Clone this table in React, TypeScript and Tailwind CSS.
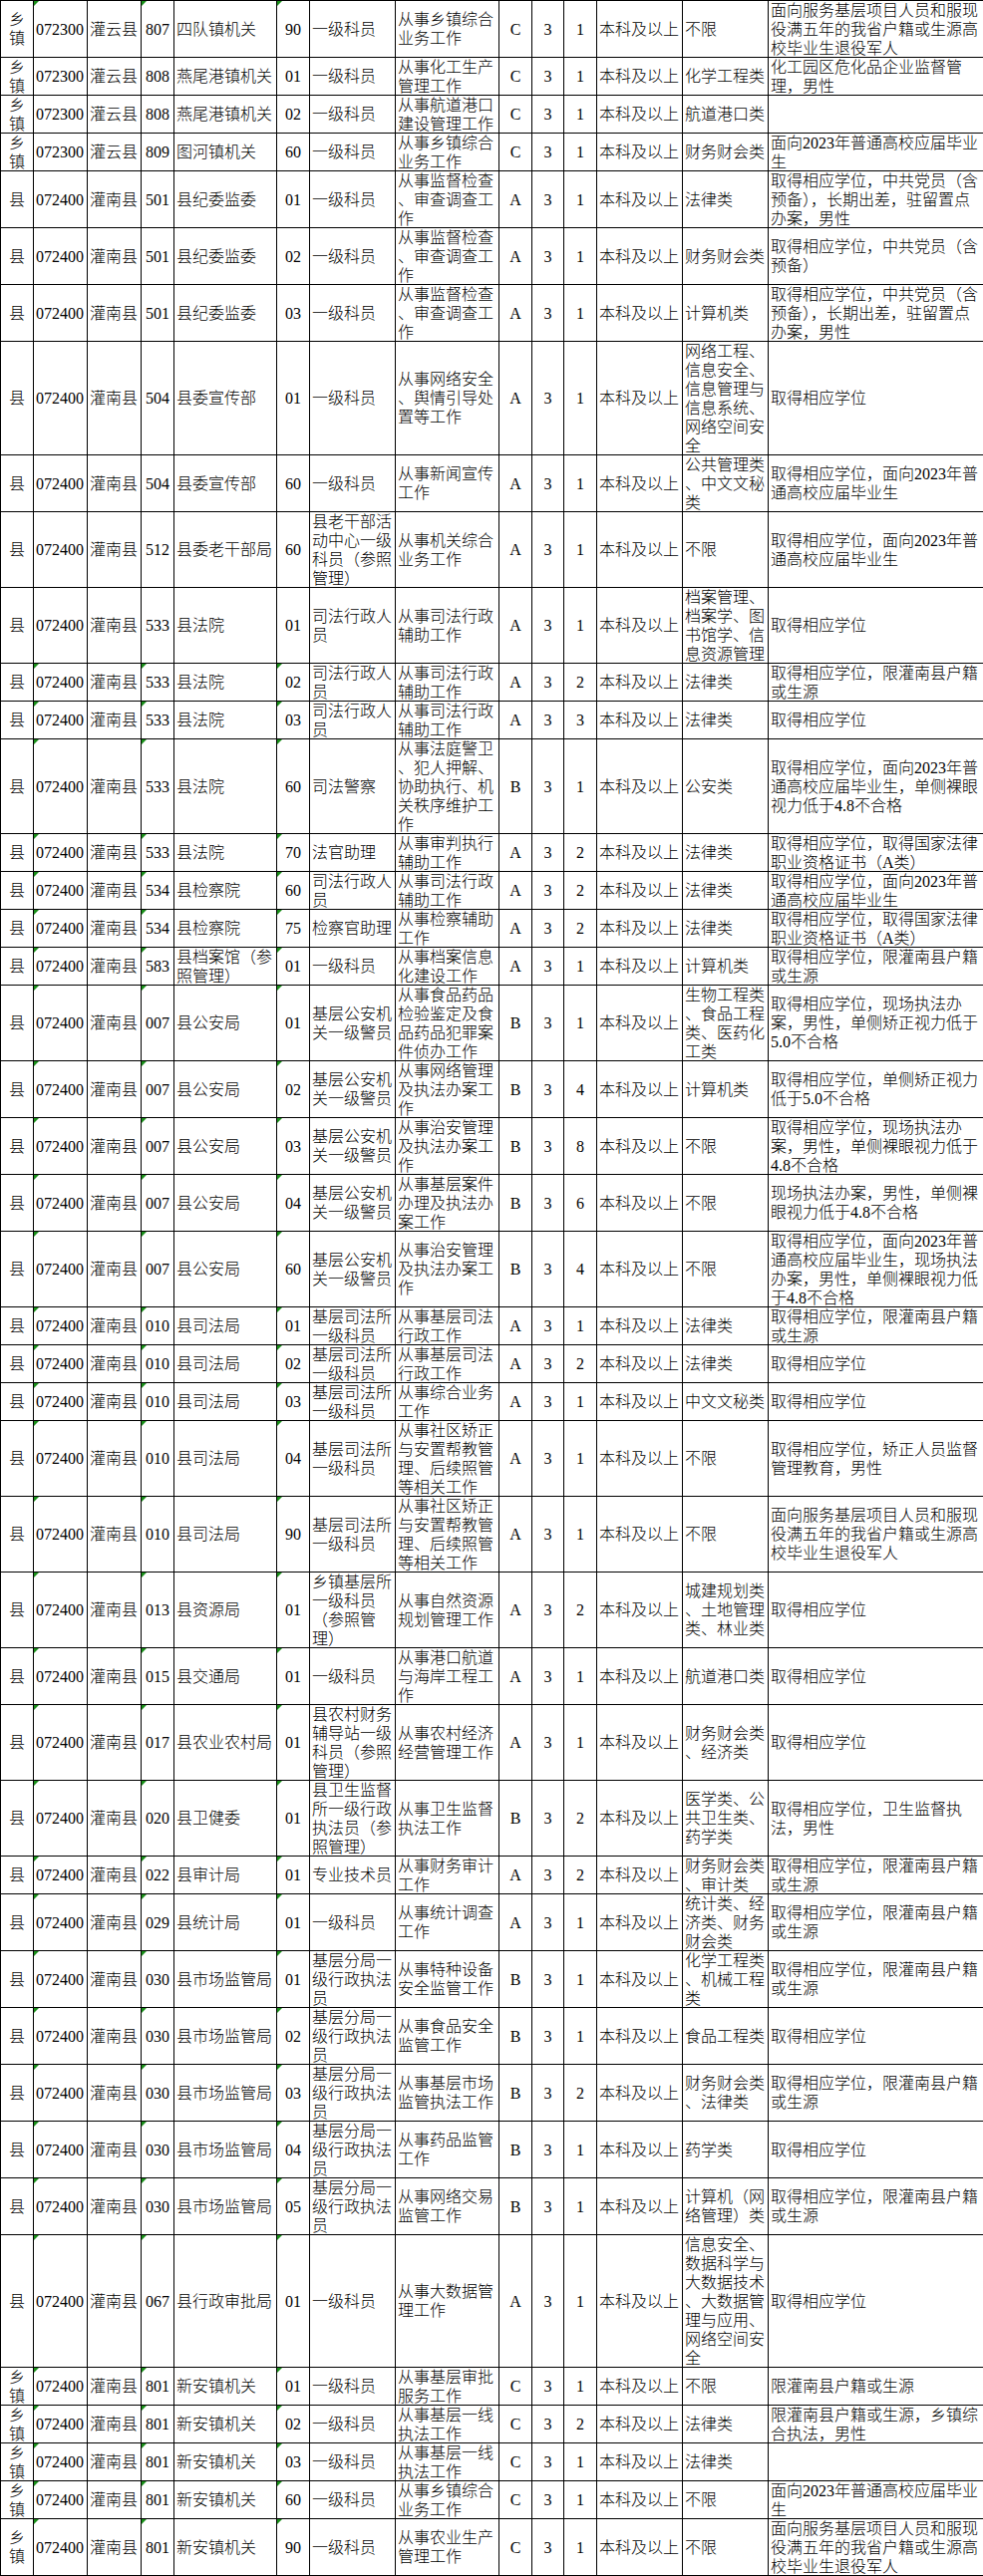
import React from "react";

const rows: string[] = [
  "3|1|乡/镇|072300|灌云县|807|四队镇机关|90|一级科员|从事乡镇综合/业务工作|C|3|1|本科及以上|不限|面向服务基层项目人员和服现/役满五年的我省户籍或生源高/校毕业生退役军人",
  "2|0|乡/镇|072300|灌云县|808|燕尾港镇机关|01|一级科员|从事化工生产/管理工作|C|3|1|本科及以上|化学工程类|化工园区危化品企业监督管/理，男性",
  "2|0|乡/镇|072300|灌云县|808|燕尾港镇机关|02|一级科员|从事航道港口/建设管理工作|C|3|1|本科及以上|航道港口类|",
  "2|0|乡/镇|072300|灌云县|809|图河镇机关|60|一级科员|从事乡镇综合/业务工作|C|3|1|本科及以上|财务财会类|面向2023年普通高校应届毕业/生",
  "3|0|县|072400|灌南县|501|县纪委监委|01|一级科员|从事监督检查/、审查调查工/作|A|3|1|本科及以上|法律类|取得相应学位，中共党员（含/预备），长期出差，驻留置点/办案，男性",
  "3|0|县|072400|灌南县|501|县纪委监委|02|一级科员|从事监督检查/、审查调查工/作|A|3|1|本科及以上|财务财会类|取得相应学位，中共党员（含/预备）",
  "3|0|县|072400|灌南县|501|县纪委监委|03|一级科员|从事监督检查/、审查调查工/作|A|3|1|本科及以上|计算机类|取得相应学位，中共党员（含/预备），长期出差，驻留置点/办案，男性",
  "6|0|县|072400|灌南县|504|县委宣传部|01|一级科员|从事网络安全/、舆情引导处/置等工作|A|3|1|本科及以上|网络工程、/信息安全、/信息管理与/信息系统、/网络空间安/全|取得相应学位",
  "3|0|县|072400|灌南县|504|县委宣传部|60|一级科员|从事新闻宣传/工作|A|3|1|本科及以上|公共管理类/、中文文秘/类|取得相应学位，面向2023年普/通高校应届毕业生",
  "4|0|县|072400|灌南县|512|县委老干部局|60|县老干部活/动中心一级/科员（参照/管理）|从事机关综合/业务工作|A|3|1|本科及以上|不限|取得相应学位，面向2023年普/通高校应届毕业生",
  "4|0|县|072400|灌南县|533|县法院|01|司法行政人/员|从事司法行政/辅助工作|A|3|1|本科及以上|档案管理、/档案学、图/书馆学、信/息资源管理|取得相应学位",
  "2|1|县|072400|灌南县|533|县法院|02|司法行政人/员|从事司法行政/辅助工作|A|3|2|本科及以上|法律类|取得相应学位，限灌南县户籍/或生源",
  "2|1|县|072400|灌南县|533|县法院|03|司法行政人/员|从事司法行政/辅助工作|A|3|3|本科及以上|法律类|取得相应学位",
  "5|1|县|072400|灌南县|533|县法院|60|司法警察|从事法庭警卫/、犯人押解、/协助执行、机/关秩序维护工/作|B|3|1|本科及以上|公安类|取得相应学位，面向2023年普/通高校应届毕业生，单侧裸眼/视力低于4.8不合格",
  "2|1|县|072400|灌南县|533|县法院|70|法官助理|从事审判执行/辅助工作|A|3|2|本科及以上|法律类|取得相应学位，取得国家法律/职业资格证书（A类）",
  "2|1|县|072400|灌南县|534|县检察院|60|司法行政人/员|从事司法行政/辅助工作|A|3|2|本科及以上|法律类|取得相应学位，面向2023年普/通高校应届毕业生",
  "2|1|县|072400|灌南县|534|县检察院|75|检察官助理|从事检察辅助/工作|A|3|2|本科及以上|法律类|取得相应学位，取得国家法律/职业资格证书（A类）",
  "2|1|县|072400|灌南县|583|县档案馆（参/照管理）|01|一级科员|从事档案信息/化建设工作|A|3|1|本科及以上|计算机类|取得相应学位，限灌南县户籍/或生源",
  "4|1|县|072400|灌南县|007|县公安局|01|基层公安机/关一级警员|从事食品药品/检验鉴定及食/品药品犯罪案/件侦办工作|B|3|1|本科及以上|生物工程类/、食品工程/类、医药化/工类|取得相应学位，现场执法办/案，男性，单侧矫正视力低于/5.0不合格",
  "3|1|县|072400|灌南县|007|县公安局|02|基层公安机/关一级警员|从事网络管理/及执法办案工/作|B|3|4|本科及以上|计算机类|取得相应学位，单侧矫正视力/低于5.0不合格",
  "3|1|县|072400|灌南县|007|县公安局|03|基层公安机/关一级警员|从事治安管理/及执法办案工/作|B|3|8|本科及以上|不限|取得相应学位，现场执法办/案，男性，单侧裸眼视力低于/4.8不合格",
  "3|1|县|072400|灌南县|007|县公安局|04|基层公安机/关一级警员|从事基层案件/办理及执法办/案工作|B|3|6|本科及以上|不限|现场执法办案，男性，单侧裸/眼视力低于4.8不合格",
  "4|1|县|072400|灌南县|007|县公安局|60|基层公安机/关一级警员|从事治安管理/及执法办案工/作|B|3|4|本科及以上|不限|取得相应学位，面向2023年普/通高校应届毕业生，现场执法/办案，男性，单侧裸眼视力低/于4.8不合格",
  "2|1|县|072400|灌南县|010|县司法局|01|基层司法所/一级科员|从事基层司法/行政工作|A|3|1|本科及以上|法律类|取得相应学位，限灌南县户籍/或生源",
  "2|1|县|072400|灌南县|010|县司法局|02|基层司法所/一级科员|从事基层司法/行政工作|A|3|2|本科及以上|法律类|取得相应学位",
  "2|1|县|072400|灌南县|010|县司法局|03|基层司法所/一级科员|从事综合业务/工作|A|3|1|本科及以上|中文文秘类|取得相应学位",
  "4|1|县|072400|灌南县|010|县司法局|04|基层司法所/一级科员|从事社区矫正/与安置帮教管/理、后续照管/等相关工作|A|3|1|本科及以上|不限|取得相应学位，矫正人员监督/管理教育，男性",
  "4|1|县|072400|灌南县|010|县司法局|90|基层司法所/一级科员|从事社区矫正/与安置帮教管/理、后续照管/等相关工作|A|3|1|本科及以上|不限|面向服务基层项目人员和服现/役满五年的我省户籍或生源高/校毕业生退役军人",
  "4|1|县|072400|灌南县|013|县资源局|01|乡镇基层所/一级科员/（参照管/理）|从事自然资源/规划管理工作|A|3|2|本科及以上|城建规划类/、土地管理/类、林业类|取得相应学位",
  "3|1|县|072400|灌南县|015|县交通局|01|一级科员|从事港口航道/与海岸工程工/作|A|3|1|本科及以上|航道港口类|取得相应学位",
  "4|1|县|072400|灌南县|017|县农业农村局|01|县农村财务/辅导站一级/科员（参照/管理）|从事农村经济/经营管理工作|A|3|1|本科及以上|财务财会类/、经济类|取得相应学位",
  "4|1|县|072400|灌南县|020|县卫健委|01|县卫生监督/所一级行政/执法员（参/照管理）|从事卫生监督/执法工作|B|3|2|本科及以上|医学类、公/共卫生类、/药学类|取得相应学位，卫生监督执/法，男性",
  "2|1|县|072400|灌南县|022|县审计局|01|专业技术员|从事财务审计/工作|A|3|2|本科及以上|财务财会类/、审计类|取得相应学位，限灌南县户籍/或生源",
  "3|1|县|072400|灌南县|029|县统计局|01|一级科员|从事统计调查/工作|A|3|1|本科及以上|统计类、经/济类、财务/财会类|取得相应学位，限灌南县户籍/或生源",
  "3|1|县|072400|灌南县|030|县市场监管局|01|基层分局一/级行政执法/员|从事特种设备/安全监管工作|B|3|1|本科及以上|化学工程类/、机械工程/类|取得相应学位，限灌南县户籍/或生源",
  "3|1|县|072400|灌南县|030|县市场监管局|02|基层分局一/级行政执法/员|从事食品安全/监管工作|B|3|1|本科及以上|食品工程类|取得相应学位",
  "3|1|县|072400|灌南县|030|县市场监管局|03|基层分局一/级行政执法/员|从事基层市场/监管执法工作|B|3|2|本科及以上|财务财会类/、法律类|取得相应学位，限灌南县户籍/或生源",
  "3|1|县|072400|灌南县|030|县市场监管局|04|基层分局一/级行政执法/员|从事药品监管/工作|B|3|1|本科及以上|药学类|取得相应学位",
  "3|1|县|072400|灌南县|030|县市场监管局|05|基层分局一/级行政执法/员|从事网络交易/监管工作|B|3|1|本科及以上|计算机（网/络管理）类|取得相应学位，限灌南县户籍/或生源",
  "7|1|县|072400|灌南县|067|县行政审批局|01|一级科员|从事大数据管/理工作|A|3|1|本科及以上|信息安全、/数据科学与/大数据技术/、大数据管/理与应用、/网络空间安/全|取得相应学位",
  "2|1|乡/镇|072400|灌南县|801|新安镇机关|01|一级科员|从事基层审批/服务工作|C|3|1|本科及以上|不限|限灌南县户籍或生源",
  "2|1|乡/镇|072400|灌南县|801|新安镇机关|02|一级科员|从事基层一线/执法工作|C|3|2|本科及以上|法律类|限灌南县户籍或生源，乡镇综/合执法，男性",
  "2|1|乡/镇|072400|灌南县|801|新安镇机关|03|一级科员|从事基层一线/执法工作|C|3|1|本科及以上|法律类|",
  "2|1|乡/镇|072400|灌南县|801|新安镇机关|60|一级科员|从事乡镇综合/业务工作|C|3|1|本科及以上|不限|面向2023年普通高校应届毕业/生",
  "3|1|乡/镇|072400|灌南县|801|新安镇机关|90|一级科员|从事农业生产/管理工作|C|3|1|本科及以上|不限|面向服务基层项目人员和服现/役满五年的我省户籍或生源高/校毕业生退役军人",
];

const heights: Record<string, string> = {
  "2": "h-[38px]",
  "3": "h-[57px]",
  "4": "h-[76px]",
  "5": "h-[95px]",
  "6": "h-[114px]",
  "7": "h-[133px]",
};

const C = "items-center text-center";
const L = "items-start text-left";

const cols: { w: string; a: string; g?: boolean }[] = [
  { w: "w-[33px] shrink-0", a: C },
  { w: "w-[54px] shrink-0", a: L, g: true },
  { w: "w-[54px] shrink-0", a: L },
  { w: "w-[33px] shrink-0", a: C, g: true },
  { w: "w-[103px] shrink-0", a: L },
  { w: "w-[33px] shrink-0", a: C, g: true },
  { w: "w-[86px] shrink-0", a: L },
  { w: "w-[104px] shrink-0", a: L },
  { w: "w-[33px] shrink-0", a: C },
  { w: "w-[32px] shrink-0", a: C },
  { w: "w-[33px] shrink-0", a: C },
  { w: "w-[86px] shrink-0", a: L },
  { w: "w-[86px] shrink-0", a: L },
  { w: "flex-1 min-w-0", a: L },
];

function Cell({ text, col, green }: { text: string; col: (typeof cols)[number]; green: boolean }) {
  const lines = text === "" ? [] : text.split("/");
  return (
    <div
      className={`relative flex flex-col justify-center overflow-hidden border-l border-black px-[2px] ${col.w} ${col.a}`}
    >
      {green && col.g ? (
        <div className="absolute left-0 top-0 h-0 w-0 border-t-[5px] border-r-[5px] border-t-[#1a8f1a] border-r-transparent" />
      ) : null}
      {lines.map((ln, i) => (
        <div key={i} className="whitespace-nowrap leading-[19px]">
          {ln}
        </div>
      ))}
    </div>
  );
}

export default function App() {
  return (
    <div
      className="w-[986px] bg-white text-black text-[16px] leading-[19px] font-light"
      style={{ fontFamily: '"Liberation Serif", "Noto Sans CJK SC", serif' }}
    >
      <div className="border-t border-black">
        {rows.map((r, ri) => {
          const parts = r.split("|");
          const n = parts[0];
          const green = parts[1] === "1";
          const cells = parts.slice(2);
          return (
            <div key={ri} className={`flex border-b border-black ${heights[n]}`}>
              {cols.map((col, ci) => (
                <Cell key={ci} text={cells[ci] ?? ""} col={col} green={green} />
              ))}
            </div>
          );
        })}
      </div>
    </div>
  );
}
